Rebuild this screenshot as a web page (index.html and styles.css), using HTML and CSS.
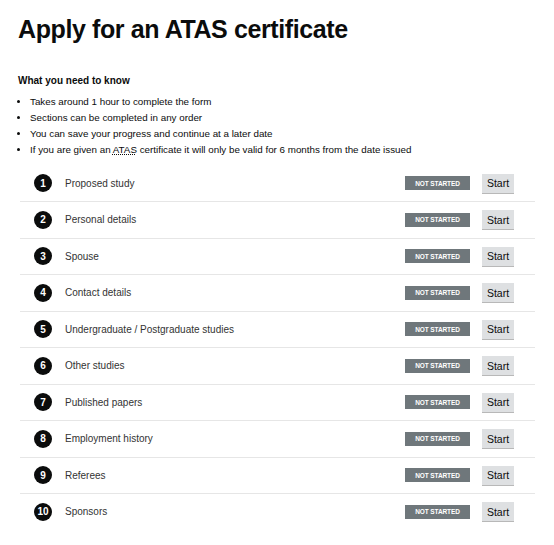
FILE: index.html
```html
<!DOCTYPE html>
<html>
<head>
<meta charset="utf-8">
<link rel="stylesheet" href="styles.css">
</head>
<body>
<main class="page">
  <h1 class="title">Apply for an ATAS certificate</h1>
  <h2 class="subtitle">What you need to know</h2>
  <ul class="info">
    <li>Takes around 1 hour to complete the form</li>
    <li>Sections can be completed in any order</li>
    <li>You can save your progress and continue at a later date</li>
    <li>If you are given an <abbr class="abbr">ATAS</abbr> certificate it will only be valid for 6 months from the date issued</li>
  </ul>
  <ol class="tasks">
    <li class="task"><span class="num">1</span><span class="name">Proposed study</span><span class="badge">NOT STARTED</span><span class="btn">Start</span></li>
    <li class="task"><span class="num">2</span><span class="name">Personal details</span><span class="badge">NOT STARTED</span><span class="btn">Start</span></li>
    <li class="task"><span class="num">3</span><span class="name">Spouse</span><span class="badge">NOT STARTED</span><span class="btn">Start</span></li>
    <li class="task"><span class="num">4</span><span class="name">Contact details</span><span class="badge">NOT STARTED</span><span class="btn">Start</span></li>
    <li class="task"><span class="num">5</span><span class="name">Undergraduate / Postgraduate studies</span><span class="badge">NOT STARTED</span><span class="btn">Start</span></li>
    <li class="task"><span class="num">6</span><span class="name">Other studies</span><span class="badge">NOT STARTED</span><span class="btn">Start</span></li>
    <li class="task"><span class="num">7</span><span class="name">Published papers</span><span class="badge">NOT STARTED</span><span class="btn">Start</span></li>
    <li class="task"><span class="num">8</span><span class="name">Employment history</span><span class="badge">NOT STARTED</span><span class="btn">Start</span></li>
    <li class="task"><span class="num">9</span><span class="name">Referees</span><span class="badge">NOT STARTED</span><span class="btn">Start</span></li>
    <li class="task"><span class="num">10</span><span class="name">Sponsors</span><span class="badge">NOT STARTED</span><span class="btn">Start</span></li>
  </ol>
</main>
</body>
</html>
```

FILE: styles.css
```css
html, body {
  margin: 0;
  padding: 0;
  background: #ffffff;
}
body {
  font-family: "Liberation Sans", Arial, sans-serif;
  color: #0b0c0c;
}
.page {
  padding: 14px 19px 0 18px;
}
.title {
  margin: 0;
  font-size: 25px;
  line-height: 30px;
  font-weight: 700;
  letter-spacing: -0.4px;
}
.subtitle {
  margin: 30px 0 0 0;
  font-size: 10px;
  line-height: 14px;
  font-weight: 700;
}
.info {
  margin: 6px 0 0 0;
  padding: 0 0 0 12px;
  font-size: 9.8px;
  line-height: 16px;
  color: #0b0c0c;
}
.abbr {
  text-decoration: underline dotted;
}
.tasks {
  list-style: none;
  margin: 7px 0 0 2px;
  padding: 0;
}
.task {
  display: flex;
  align-items: center;
  height: 36px;
  padding: 0 21px 0 14px;
}
.task + .task {
  border-top: 1px solid #e6e6e6;
  height: 35.5px;
}
.num {
  width: 18px;
  height: 18px;
  border-radius: 50%;
  background: #0b0c0c;
  color: #ffffff;
  font-size: 10px;
  font-weight: 700;
  display: flex;
  align-items: center;
  justify-content: center;
  flex: none;
}
.name {
  margin-left: 13px;
  font-size: 10px;
  color: #333333;
  flex: 1;
}
.badge {
  width: 65px;
  height: 14px;
  background: #6f777b;
  color: #ffffff;
  font-size: 6.5px;
  font-weight: 700;
  display: flex;
  align-items: center;
  justify-content: center;
  letter-spacing: -0.1px;
}
.btn {
  margin-left: 12px;
  width: 32px;
  height: 19px;
  background: #dee0e2;
  box-shadow: 0 1px 0 #b8b8b8;
  font-size: 10.5px;
  color: #0b0c0c;
  display: flex;
  align-items: center;
  justify-content: center;
}
```
